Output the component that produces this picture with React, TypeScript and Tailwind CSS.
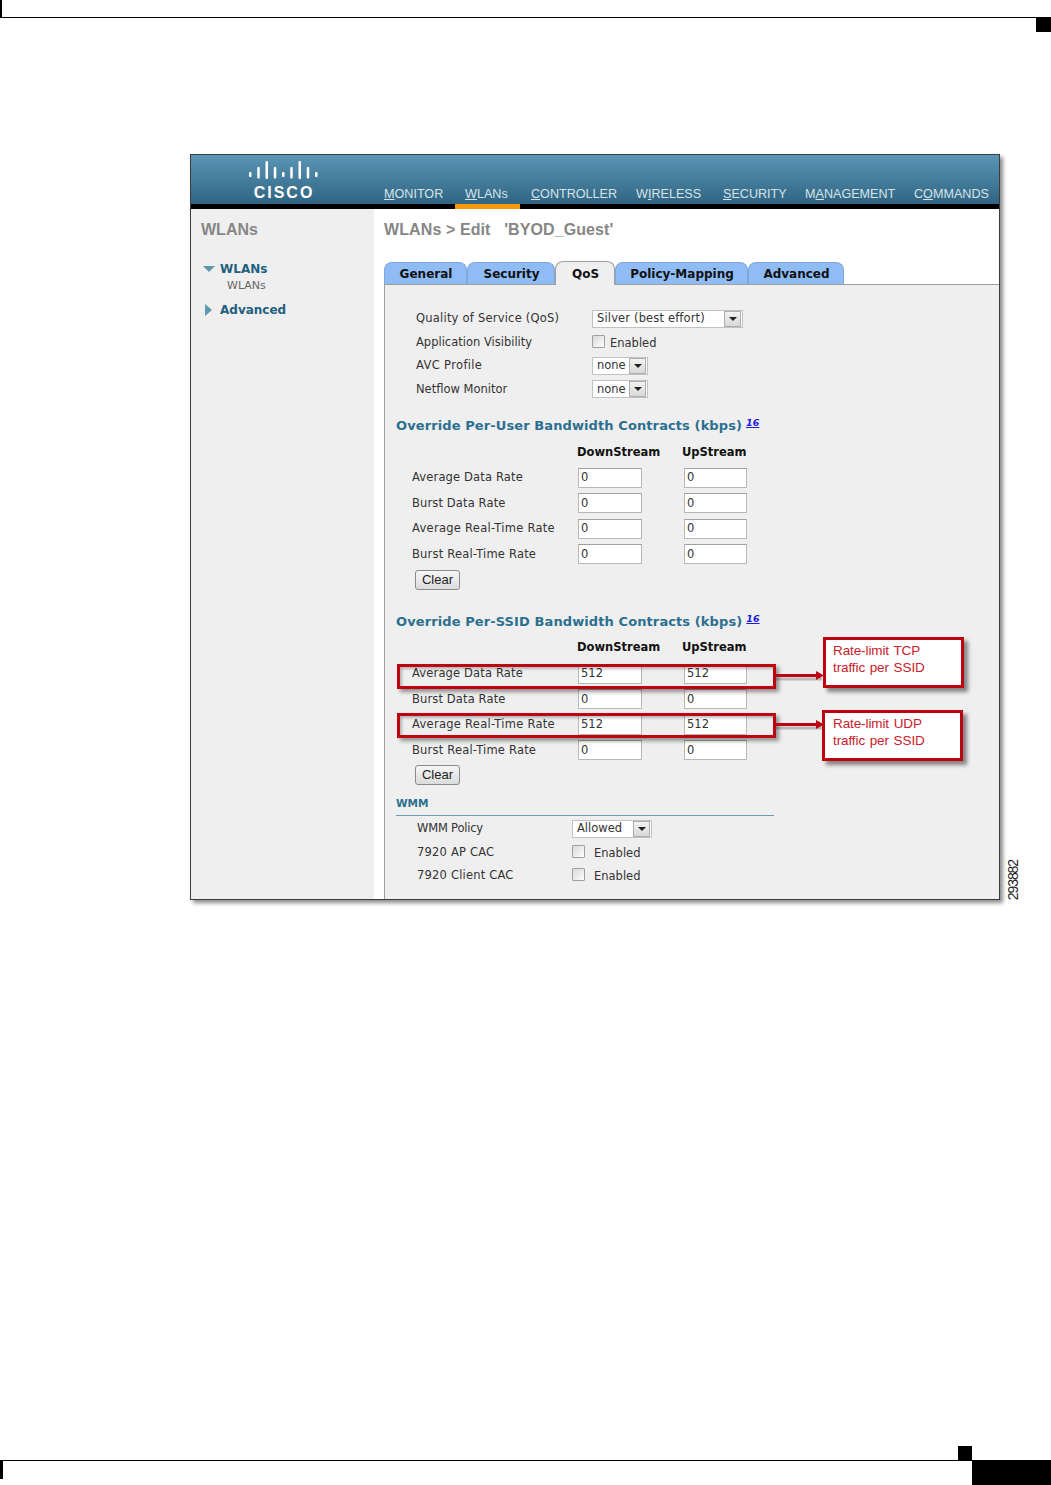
import React from "react";

const dv = "font-['DejaVu_Sans',sans-serif]";

function Arrow() {
  return (
    <span className="flex h-[16px] w-[17px] items-center justify-center border border-[#aeaeae] bg-gradient-to-b from-[#f2f2f2] to-[#d8d8d8]">
      <svg width="8" height="4" viewBox="0 0 8 4"><path d="M0 0h8L4 4z" fill="#222" /></svg>
    </span>
  );
}

function Select({ text, w, track = "" }: { text: string; w: string; track?: string }) {
  return (
    <div className={`flex h-[18px] items-center justify-between border border-[#c2c2c2] bg-white pl-[4px] pr-px text-[11.5px] text-[#333] ${w} ${track}`}>
      <span>{text}</span>
      <Arrow />
    </div>
  );
}

function Check() {
  return <span className="-mt-[2px] block h-[13px] w-[13px] rounded-[1px] border border-[#a0a0a0] bg-gradient-to-br from-[#d8d8d8] to-white" />;
}

function Field({ v }: { v: string }) {
  return (
    <div className="flex h-[20px] items-center border border-[#b8b8b8] border-t-[#a0a0a0] bg-white pl-[2px] text-[11.5px] text-[#333]">
      {v}
    </div>
  );
}

function Rate({ label, down, up, track }: { label: string; down: string; up: string; track: string }) {
  return (
    <div className="flex h-[25.5px] items-center">
      <span className={`w-[193px] pl-[27px] text-[11.5px] text-[#333] ${track}`}>{label}</span>
      <div className="w-[64px]"><Field v={down} /></div>
      <div className="ml-[42px] w-[63px]"><Field v={up} /></div>
    </div>
  );
}

function RateHead({ cls }: { cls: string }) {
  return (
    <div className={`flex h-[20px] items-center text-[11.5px] font-bold text-[#111] ${cls}`}>
      <span className="ml-[192px] w-[105px]">DownStream</span>
      <span>UpStream</span>
    </div>
  );
}

function Heading({ text, cls }: { text: string; cls: string }) {
  return (
    <div className={`flex h-[24px] items-center pl-[11px] ${cls}`}>
      <span className="text-[13px] font-bold tracking-[0.1px] text-[#2c6f90]">{text}</span>
      <sup className="ml-[4px] mt-[4px] text-[9.5px] font-bold italic text-[#1a1ae0] underline">16</sup>
    </div>
  );
}

function Clear({ cls }: { cls: string }) {
  return (
    <button className={`ml-[30px] flex h-[20px] w-[45px] items-center justify-center rounded-[3px] border border-[#8a8a8a] bg-gradient-to-b from-[#f6f6f6] to-[#dcdcdc] font-['Liberation_Sans',sans-serif] text-[13px] text-[#222] ${cls}`}>
      Clear
    </button>
  );
}

function QosRow({ label, track = "", children }: { label: string; track?: string; children: React.ReactNode }) {
  return (
    <div className="flex h-[23.5px] items-center">
      <span className={`w-[207px] pl-[31px] text-[11.5px] text-[#333] ${track}`}>{label}</span>
      {children}
    </div>
  );
}

function WmmRow({ label, track, children }: { label: string; track: string; children: React.ReactNode }) {
  return (
    <div className="flex h-[23.5px] items-center">
      <span className={`w-[187px] pl-[32px] text-[11.5px] text-[#333] ${track}`}>{label}</span>
      {children}
    </div>
  );
}

function Enabled({ cls }: { cls: string }) {
  return <span className={`mt-[2px] text-[11.5px] text-[#333] ${cls}`}>Enabled</span>;
}

function Tab({ text, w, active }: { text: string; w: string; active?: boolean }) {
  return (
    <div className={`flex items-center justify-center rounded-t-[8px] border border-b-0 pl-px text-[12px] font-bold text-[#111] ${w} ${active ? "relative z-10 h-[24px] border-[#a0a0a0] bg-[#efefef]" : "h-[23px] border-[#7ea8d8] bg-[#90bcf6]"}`}>
      {text}
    </div>
  );
}

function Cisco() {
  const bars: [number, number][] = [
    [11, 5], [6, 11.5], [0, 18], [6, 11.5], [11, 5], [6, 11.5], [0, 18], [6, 11.5], [11, 5],
  ];
  return (
    <div className="flex w-[183px] shrink-0 flex-col items-center pl-[3px] pt-[6px]">
      <svg width="72" height="20" viewBox="0 0 72 20">
        {bars.map(([y, h], i) => (
          <rect key={i} x={1 + i * 8.25} y={y} width="2.5" height={h} rx="1" fill="#fff" />
        ))}
      </svg>
      <span className="mt-[3px] font-['Liberation_Sans',sans-serif] text-[16px] font-bold leading-[18px] tracking-[2px] text-white">CISCO</span>
    </div>
  );
}

const navItems: [string, string, string, string][] = [
  ["", "M", "ONITOR", "w-[81px]"],
  ["", "W", "LANs", "w-[66px]"],
  ["", "C", "ONTROLLER", "w-[105px]"],
  ["W", "I", "RELESS", "w-[87px]"],
  ["", "S", "ECURITY", "w-[82px]"],
  ["M", "A", "NAGEMENT", "w-[109px]"],
  ["C", "O", "MMANDS", "w-[74px]"],
];

function Callout({ cls, lines }: { cls: string; lines: string[] }) {
  return (
    <div className={`absolute h-[51px] w-[141px] border-[3px] border-[#bd0411] bg-white pt-[2px] font-['Liberation_Sans',sans-serif] text-[13.5px] leading-[17px] tracking-[-0.1px] text-[#c8202c] shadow-[4px_4px_4px_rgba(0,0,0,0.45)] [word-spacing:1px] ${cls}`}>
      {lines.map((l) => <div key={l}>{l}</div>)}
    </div>
  );
}

function Highlight({ cls }: { cls: string }) {
  return <div className={`absolute w-[379px] border-[3px] border-[#bd0411] shadow-[3px_3px_4px_rgba(0,0,0,0.4),inset_2px_2px_3px_rgba(0,0,0,0.25)] ${cls}`} />;
}

function Connector({ cls }: { cls: string }) {
  return (
    <svg className={`absolute ${cls}`} width="50" height="14" viewBox="0 0 50 14">
      <rect x="0" y="7.5" width="46" height="3" fill="#000" opacity="0.22" />
      <rect x="0" y="4" width="44" height="3" fill="#bd0411" />
      <path d="M40 1 48 5.5 40 10z" fill="#bd0411" />
    </svg>
  );
}

export default function App() {
  return (
    <div className="relative h-[1485px] w-[1051px] overflow-hidden bg-white">
      {/* top page rule */}
      <div className="h-[18px] border-b border-l-2 border-black" />
      <div className="ml-auto h-[14px] w-[15px] bg-black" />

      {/* main window */}
      <div className={`relative ml-[190px] mt-[122px] flex h-[746px] w-[810px] flex-col border border-[#3c3c3c] bg-white shadow-[3px_3px_4px_rgba(0,0,0,0.45)] ${dv}`}>
        <div className="flex h-[49px] bg-gradient-to-b from-[#5b96b6] to-[#2f6582]">
          <Cisco />
          <nav className="ml-[10px] flex self-end pb-[2px] font-['Liberation_Sans',sans-serif] text-[12.6px] leading-[16px] text-[#d6e3ea]">
            {navItems.map(([a, b, c, w]) => (
              <span key={a + b + c} className={w}>{a}<u>{b}</u>{c}</span>
            ))}
          </nav>
        </div>
        <div className="h-[5px] bg-black pl-[264px]"><div className="h-full w-[65px] bg-[#f59a0d]" /></div>

        <div className="flex min-h-0 flex-1">
          {/* sidebar */}
          <aside className="w-[183px] bg-[#efefef]">
            <div className="ml-[10px] mt-[11px] font-['Liberation_Sans',sans-serif] text-[16px] font-bold leading-[20px] text-[#868686]">WLANs</div>
            <div className="mt-[20px] flex h-[18px] items-center">
              <svg className="ml-[12px]" width="12" height="6" viewBox="0 0 12 6"><path d="M0 0h12L6 6z" fill="#5d98ad" /></svg>
              <span className="ml-[5px] text-[12px] font-bold text-[#1f5f7f]">WLANs</span>
            </div>
            <div className="ml-[36px] text-[11px] leading-[15px] text-[#666]">WLANs</div>
            <div className="mt-[8px] flex h-[18px] items-center">
              <svg className="ml-[14px]" width="7" height="12" viewBox="0 0 7 12"><path d="M0 0v12l7-6z" fill="#5d98ad" /></svg>
              <span className="ml-[8px] text-[12px] font-bold text-[#1f5f7f]">Advanced</span>
            </div>
          </aside>

          {/* content */}
          <main className="flex flex-1 flex-col">
            <div className="ml-[10px] mt-[11px] whitespace-pre font-['Liberation_Sans',sans-serif] text-[16px] font-bold leading-[20px] tracking-[0.1px] text-[#868686]">WLANs &gt; Edit   'BYOD_Guest'</div>
            <div className="ml-[10px] mt-[21px] flex h-[24px] items-end">
              <Tab text="General" w="w-[83px]" />
              <Tab text="Security" w="w-[88px]" />
              <Tab text="QoS" w="w-[60px]" active />
              <Tab text="Policy-Mapping" w="w-[133px]" />
              <Tab text="Advanced" w="w-[96px]" />
            </div>
            <section className="ml-[10px] -mt-px flex-1 border-l border-t border-[#a0a0a0] bg-[#efefef] pt-[22px]">
              <QosRow label="Quality of Service (QoS)" track="tracking-[0.22px]">
                <Select text="Silver (best effort)" w="w-[151px]" track="tracking-[0.15px]" />
              </QosRow>
              <QosRow label="Application Visibility">
                <Check />
                <Enabled cls="ml-[5px]" />
              </QosRow>
              <QosRow label="AVC Profile" track="tracking-[0.35px]"><Select text="none" w="w-[56px]" /></QosRow>
              <QosRow label="Netflow Monitor"><Select text="none" w="w-[56px]" /></QosRow>

              <Heading text="Override Per-User Bandwidth Contracts (kbps)" cls="mt-[13px]" />
              <RateHead cls="mt-[5px]" />
              <div className="mt-[2px]">
                <Rate label="Average Data Rate" down="0" up="0" track="tracking-[0.15px]" />
                <Rate label="Burst Data Rate" down="0" up="0" track="tracking-[0.13px]" />
                <Rate label="Average Real-Time Rate" down="0" up="0" track="tracking-[0.27px]" />
                <Rate label="Burst Real-Time Rate" down="0" up="0" track="tracking-[0.2px]" />
              </div>
              <Clear cls="mt-[3px]" />

              <Heading text="Override Per-SSID Bandwidth Contracts (kbps)" cls="mt-[20px]" />
              <RateHead cls="mt-[4px]" />
              <div className="mt-[3px]">
                <Rate label="Average Data Rate" down="512" up="512" track="tracking-[0.15px]" />
                <Rate label="Burst Data Rate" down="0" up="0" track="tracking-[0.13px]" />
                <Rate label="Average Real-Time Rate" down="512" up="512" track="tracking-[0.27px]" />
                <Rate label="Burst Real-Time Rate" down="0" up="0" track="tracking-[0.2px]" />
              </div>
              <Clear cls="mt-[2px]" />

              <div className="mb-px ml-[11px] mt-[11px] h-[20px] w-[378px] border-b border-[#6f9cb3] text-[10.5px] font-bold leading-[14px] text-[#2c6f90]">WMM</div>
              <WmmRow label="WMM Policy" track="-tracking-[0.2px]"><Select text="Allowed" w="w-[80px]" /></WmmRow>
              <WmmRow label="7920 AP CAC" track="tracking-[0.2px]"><Check /><Enabled cls="ml-[9px]" /></WmmRow>
              <WmmRow label="7920 Client CAC" track="tracking-[0.2px]"><Check /><Enabled cls="ml-[9px]" /></WmmRow>
            </section>
          </main>
        </div>

        {/* annotations */}
        <Highlight cls="left-[206px] top-[509px] h-[25px]" />
        <Highlight cls="left-[206px] top-[558px] h-[25px]" />
        <Connector cls="left-[585px] top-[515px]" />
        <Connector cls="left-[585px] top-[564px]" />
        <Callout cls="left-[632px] top-[482px] pl-[7px]" lines={["Rate-limit TCP", "traffic per SSID"]} />
        <Callout cls="left-[631px] top-[555px] pl-[8px]" lines={["Rate-limit UDP", "traffic per SSID"]} />
      </div>

      {/* figure id */}
      <div className="absolute left-[1006px] top-[860px] rotate-180 font-['Liberation_Sans',sans-serif] text-[14px] leading-[14px] tracking-[-1.1px] text-[#222] [writing-mode:vertical-rl]">293882</div>

      {/* bottom page rule */}
      <div className="absolute bottom-0 left-0 flex h-[39px] w-full items-start">
        <div className="relative mt-[14px] h-[18px] w-[972px] border-t border-black">
          <div className="absolute left-0 top-0 h-[18px] w-[3px] bg-black" />
          <div className="absolute -top-[15px] right-0 h-[14px] w-[14px] bg-black" />
        </div>
        <div className="mt-[14px] h-[25px] flex-1 bg-black" />
      </div>
    </div>
  );
}
